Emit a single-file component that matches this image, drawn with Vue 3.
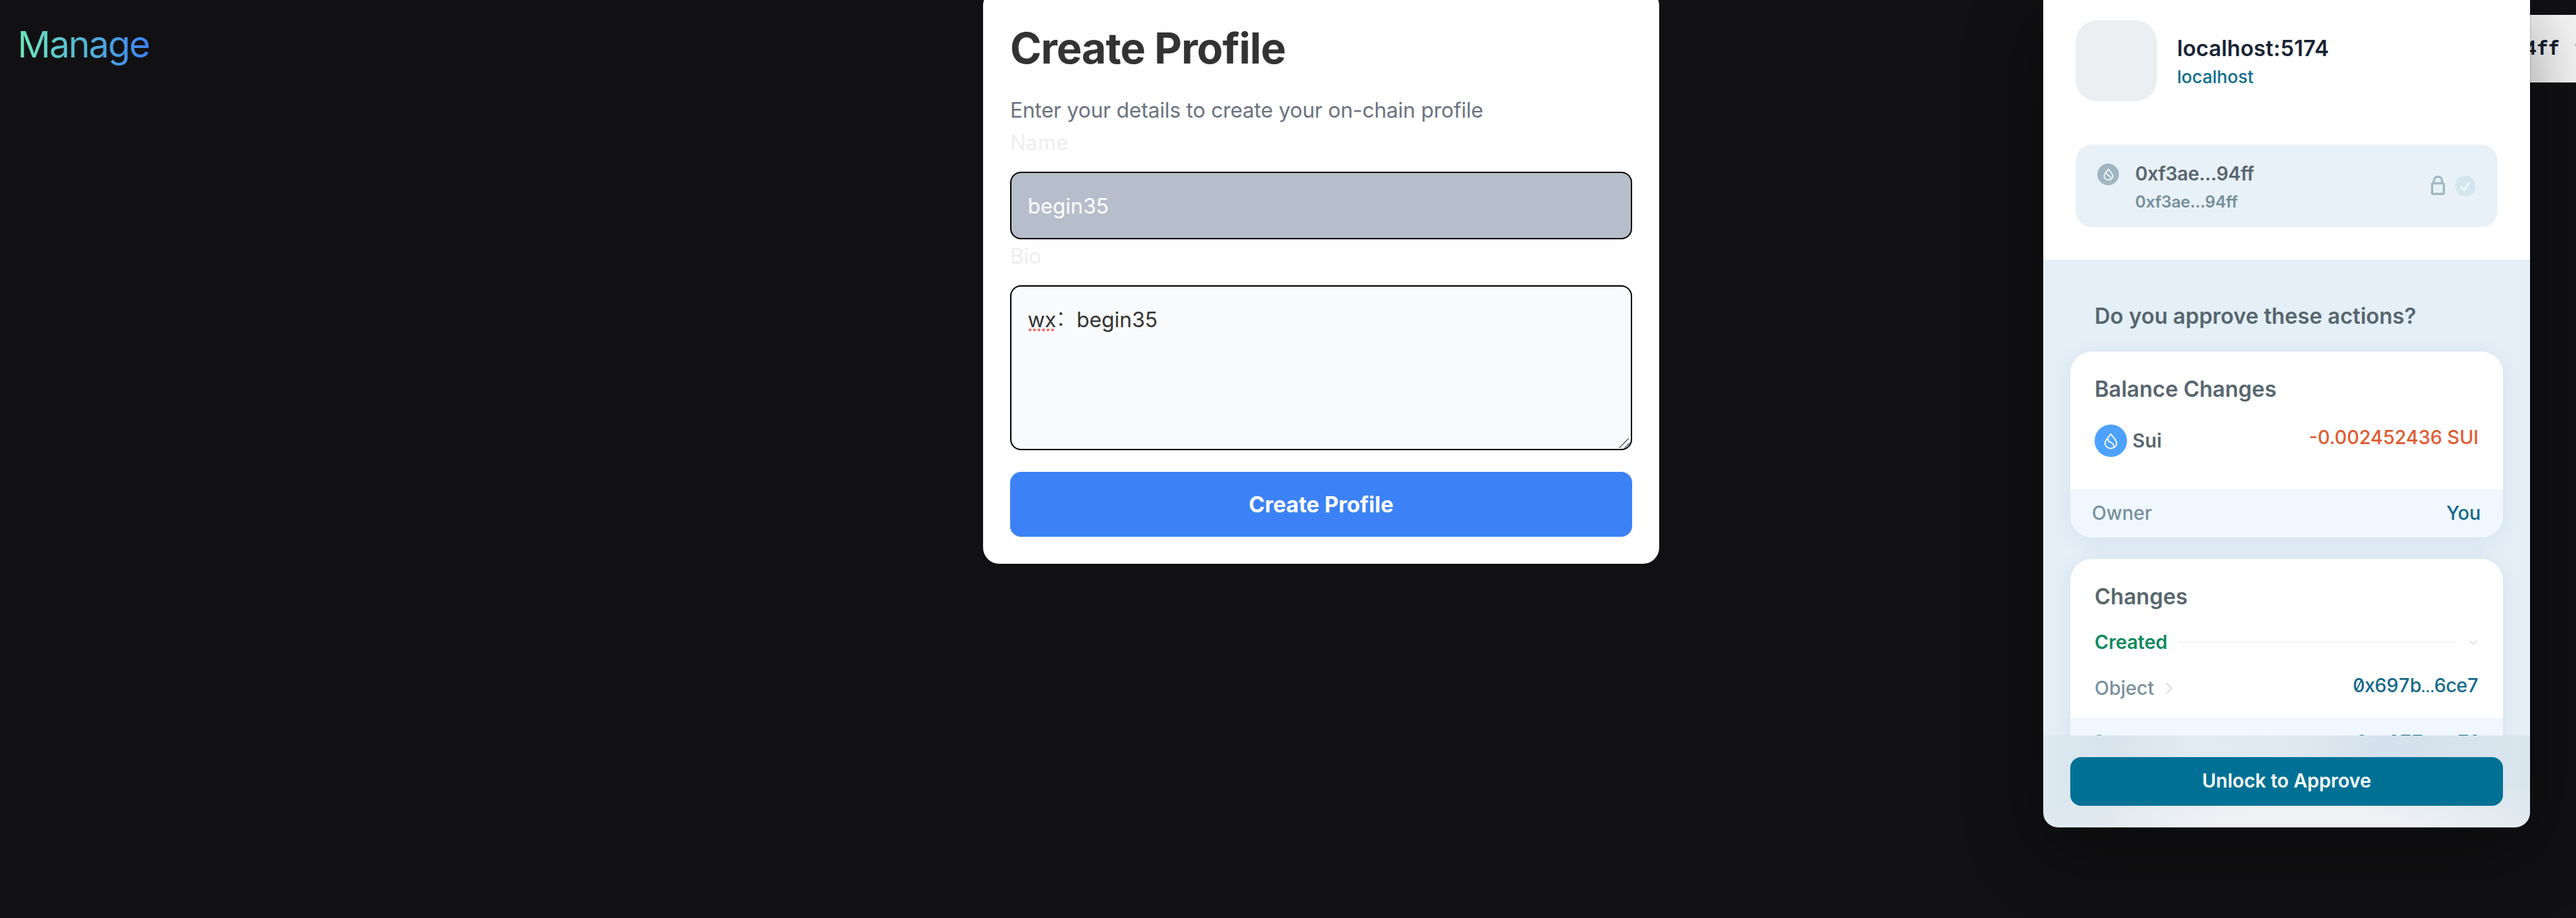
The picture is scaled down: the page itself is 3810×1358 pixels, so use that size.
<script setup>
import { ref } from 'vue'

const name = ref('begin35')
const shortAddress = '0xf3ae...94ff'
const drop = 'M10 1.6C13 6 18.6 10.6 18.6 15.2A8.6 7.7 0 0 1 1.4 15.2C1.4 10.6 7 6 10 1.6Z'
const wave = 'M5.8 7.6C5 11.6 7.6 12.8 10.4 14.2C13.8 15.9 15.2 18.6 13.7 21.8'
</script>

<template>
  <div class="page">
    <header class="brand"><span class="brand-text">Manage</span></header>

    <main class="profile-card">
      <h1>Create Profile</h1>
      <p class="lead">Enter your details to create your on-chain profile</p>
      <label class="label">Name</label>
      <div class="field input">{{ name }}</div>
      <label class="label bio">Bio</label>
      <div class="field area">
        <span class="typo">wx</span><span class="colon">：</span>begin35
        <svg class="grip" width="17" height="17" viewBox="0 0 17 17" fill="none" stroke="#55565a" stroke-width="1.3">
          <path d="M1 15.5L15 1.5M9 15.5L16 8.5" />
        </svg>
      </div>
      <button class="submit">Create Profile</button>
    </main>

    <section class="wallet">
      <div class="wallet-head">
        <div class="site">
          <div class="avatar"></div>
          <div>
            <div class="site-name">localhost:5174</div>
            <div class="site-link">localhost</div>
          </div>
        </div>
        <div class="account">
          <span class="coin small">
            <svg width="15" height="20" viewBox="0 0 20 24" fill="none" stroke="#fff" stroke-width="2" stroke-linejoin="round"><path :d="drop" /><path :d="wave" /></svg>
          </span>
          <div class="account-text">
            <div class="account-name">{{ shortAddress }}</div>
            <div class="account-sub">{{ shortAddress }}</div>
          </div>
          <svg class="lock" width="22" height="30" viewBox="0 0 22 30" fill="none" stroke="#a0b6c3" stroke-width="3.2">
            <rect x="2.1" y="12.2" width="17.4" height="15.6" rx="1.6" />
            <path d="M4.7 12V8.4a6.1 6.1 0 0 1 12.2 0V12" />
          </svg>
          <svg width="31" height="31" viewBox="0 0 31 31" fill="none">
            <circle cx="15.5" cy="15.5" r="15.3" fill="#d5e6ee" />
            <path d="M9.4 16.6L13.6 21.2L21 10.4" stroke="#f3f9fc" stroke-width="2.6" stroke-linecap="round" stroke-linejoin="round" />
          </svg>
        </div>
      </div>

      <div class="wallet-body">
        <h2 class="question">Do you approve these actions?</h2>
        <div class="card">
          <div class="card-main">
            <h2>Balance Changes</h2>
            <div class="balance">
              <span class="coin">
                <svg width="20" height="25" viewBox="0 0 20 24" fill="none" stroke="#fff" stroke-width="1.8" stroke-linejoin="round"><path :d="drop" /><path :d="wave" /></svg>
              </span>
              <span class="coin-name">Sui</span>
              <span class="amount">-0.002452436 SUI</span>
            </div>
          </div>
          <div class="strip"><span>Owner</span><span class="teal">You</span></div>
        </div>
        <div class="card">
          <div class="card-main changes">
            <h2>Changes</h2>
            <div class="created">
              <span>Created</span>
              <i class="rule"></i>
              <svg width="16" height="16" viewBox="0 0 16 16" fill="none" stroke="#dfe2e5" stroke-width="2" stroke-linecap="round" stroke-linejoin="round"><path d="M3.4 6.4L8 10.8L12.6 6.4" /></svg>
            </div>
            <div class="object">
              <span>Object</span>
              <svg class="more" width="12" height="18" viewBox="0 0 12 18" fill="none" stroke="#e2e5e7" stroke-width="2.6" stroke-linecap="round" stroke-linejoin="round"><path d="M2 2L9 9L2 16" /></svg>
              <span class="hash">0x697b<span class="dots">…</span>6ce7</span>
            </div>
          </div>
          <div class="strip"><span>Owner</span><span class="hash">0xe877<span class="dots">…</span>ea78</span></div>
        </div>
      </div>

      <footer class="wallet-foot"><button class="unlock">Unlock to Approve</button></footer>
    </section>

    <aside class="connected">
      <span>4ff</span>
      <svg width="20" height="14" viewBox="0 0 20 14" fill="none" stroke="#8fa9b3" stroke-width="3" stroke-linecap="round"><path d="M2 3L10 11L18 3" /></svg>
    </aside>
  </div>
</template>

<style>
body {
  background: #111113;
}
</style>

<style scoped>
.page {
  display: grid;
  grid-template-columns: 1454px 1000px 1fr 720px 68px;
  align-items: start;
  width: 3810px;
  height: 1358px;
  overflow: hidden;
  background: #111113;
  font-family: Inter, "Noto Sans CJK SC", sans-serif;
}
h1,
h2,
p {
  margin: 0;
}
button {
  display: block;
  width: 100%;
  border: 0;
  padding: 0;
  font-family: inherit;
  color: #fff;
}
.brand {
  padding: 33px 0 0 26px;
}
.brand-text {
  display: inline-block;
  font-size: 54px;
  line-height: 66px;
  letter-spacing: -1.9px;
  background: linear-gradient(90deg, #6ee7b7, #3b82f6);
  background-clip: text;
  -webkit-background-clip: text;
  color: transparent;
}
.profile-card {
  box-sizing: border-box;
  margin-top: -16px;
  height: 850px;
  padding: 49px 40px 40px;
  border-radius: 24px;
  background: #fff;
}
h1 {
  font-size: 63px;
  line-height: 76px;
  font-weight: 700;
  letter-spacing: -1px;
  color: #333;
}
.lead {
  margin-top: 30px;
  font-size: 31px;
  line-height: 48px;
  letter-spacing: -0.19px;
  color: #6b7280;
}
.label {
  display: block;
  margin-bottom: 19px;
  font-size: 31px;
  line-height: 48px;
  color: #eeeef0;
}
.bio {
  margin-top: 1px;
}
.field {
  box-sizing: border-box;
  border: 2px solid #000;
  border-radius: 16px;
  font-size: 31px;
  line-height: 48px;
}
.input {
  height: 100px;
  padding: 25px 24px 23px;
  background: #b6bdcb;
  color: #fff;
}
.area {
  position: relative;
  height: 244px;
  padding: 25px 24px;
  background: #f9fafc;
  color: #333;
}
.typo {
  position: relative;
}
.typo::after {
  content: "";
  position: absolute;
  left: 0;
  bottom: 1px;
  width: 40px;
  height: 4px;
  background: radial-gradient(circle, #f0706a 1.8px, transparent 2.3px) 0 0 / 6.7px 4px;
}
.colon {
  margin-left: -1px;
  font-family: "Noto Sans CJK SC", sans-serif;
  font-weight: 300;
  line-height: 0;
  vertical-align: 3px;
}
.grip {
  position: absolute;
  right: 1px;
  bottom: 0;
}
.submit {
  height: 96px;
  margin-top: 32px;
  border-radius: 16px;
  background: #3c82f6;
  font-size: 32px;
  font-weight: 700;
}
.wallet {
  grid-column: 4;
  position: relative;
  z-index: 1;
  height: 1224px;
  border-radius: 0 0 22px 22px;
  box-shadow: 0 0 2px rgba(0, 0, 0, 0.5), 0 28px 110px rgba(0, 0, 0, 0.4);
}
.wallet-head {
  box-sizing: border-box;
  height: 384px;
  padding: 30px 48px 0;
  background: #fff;
}
.site {
  display: flex;
  align-items: center;
  gap: 30px;
}
.avatar {
  width: 120px;
  height: 120px;
  border-radius: 32px;
  background: #ebeff2;
}
.site-name {
  padding-top: 1px;
  font-size: 32px;
  line-height: 40px;
  font-weight: 600;
  letter-spacing: 0.1px;
  color: #182435;
}
.site-link {
  margin-top: 6px;
  font-size: 26px;
  line-height: 32px;
  font-weight: 500;
  color: #0d6b8c;
}
.account {
  box-sizing: border-box;
  display: flex;
  align-items: center;
  height: 122px;
  margin-top: 64px;
  padding: 0 32px;
  border-radius: 24px;
  background: #e8f1f7;
}
.coin {
  display: flex;
  align-items: center;
  justify-content: center;
  width: 48px;
  height: 48px;
  border-radius: 50%;
  background: #4da2ff;
}
.coin.small {
  align-self: flex-start;
  width: 32px;
  height: 32px;
  margin-top: 28px;
  background: #a0b6c3;
}
.account-text {
  flex: 1;
  padding: 5px 0 0 24px;
  font-weight: 600;
  line-height: 32px;
}
.account-name {
  font-size: 28px;
  letter-spacing: -0.3px;
  color: #58666f;
}
.account-sub {
  margin-top: 10px;
  font-size: 24px;
  letter-spacing: -0.2px;
  color: #768f9c;
}
.lock {
  margin: -2px 14px 0 0;
}
.wallet-body {
  box-sizing: border-box;
  height: 704px;
  padding: 64px 40px 0;
  overflow: hidden;
  background: #e4eff8;
}
h2 {
  font-size: 32px;
  line-height: 40px;
  font-weight: 600;
  color: #57666f;
}
.question {
  padding-left: 36px;
}
.card {
  margin-top: 32px;
  border-radius: 32px;
  overflow: hidden;
  background: #fff;
  box-shadow: 0 6px 36px rgba(20, 60, 100, 0.07);
  font-size: 28px;
  font-weight: 500;
  line-height: 38px;
}
.card-main {
  padding: 36px 36px 48px;
}
.card-main.changes {
  padding-bottom: 25px;
}
.balance {
  display: flex;
  align-items: center;
  margin-top: 32px;
}
.coin-name {
  margin-left: 8px;
  font-weight: 600;
  letter-spacing: 0.3px;
  color: #57666f;
}
.amount {
  align-self: flex-start;
  margin-left: auto;
  color: #df5b32;
}
.strip {
  box-sizing: border-box;
  display: flex;
  align-items: center;
  justify-content: space-between;
  height: 71px;
  padding: 0 33px 2px 32px;
  background: #f0f7fe;
  color: #78909c;
}
.changes + .strip {
  padding-bottom: 0;
}
.teal,
.hash {
  color: #14698a;
}
.hash {
  font-feature-settings: "zero", "tnum";
  letter-spacing: -0.75px;
  line-height: 30px;
}
.dots {
  font-size: 22px;
  line-height: 0;
}
.created {
  display: flex;
  align-items: center;
  gap: 16px;
  margin-top: 28px;
  font-weight: 600;
  color: #0f8a5e;
}
.rule {
  flex: 1;
  height: 2px;
  background: #f3f4f6;
}
.object {
  display: flex;
  align-items: flex-start;
  margin-top: 30px;
  color: #78909c;
}
.more {
  margin: 10px 0 0 17px;
}
.object .hash {
  margin-left: auto;
}
.wallet-foot {
  box-sizing: border-box;
  height: 136px;
  padding: 32px 40px;
  border-radius: 0 0 22px 22px;
  background:
    radial-gradient(ellipse 58% 75% at 55% 105%, #eff1f4 35%, rgba(239, 241, 244, 0) 100%),
    linear-gradient(90deg, #dde9f1 0%, #d8e4ed 14%, #e2eaf3 30%, #e1e9f1 50%, #d4e1ec 70%, #dae6ee 100%);
}
.unlock {
  height: 72px;
  padding-bottom: 2px;
  border-radius: 16px;
  background: #007195;
  font-size: 28px;
  font-weight: 600;
}
.connected {
  display: flex;
  align-items: center;
  box-sizing: border-box;
  width: 200px;
  height: 100px;
  margin: 22px 0 0 -60px;
  padding: 0 0 4px 53px;
  background: #f5f5f6;
  font: 700 28px/38px "Noto Sans Mono", "Roboto Mono", monospace;
  color: #17202f;
}
.connected svg {
  flex: none;
  margin-left: 23px;
}
</style>
